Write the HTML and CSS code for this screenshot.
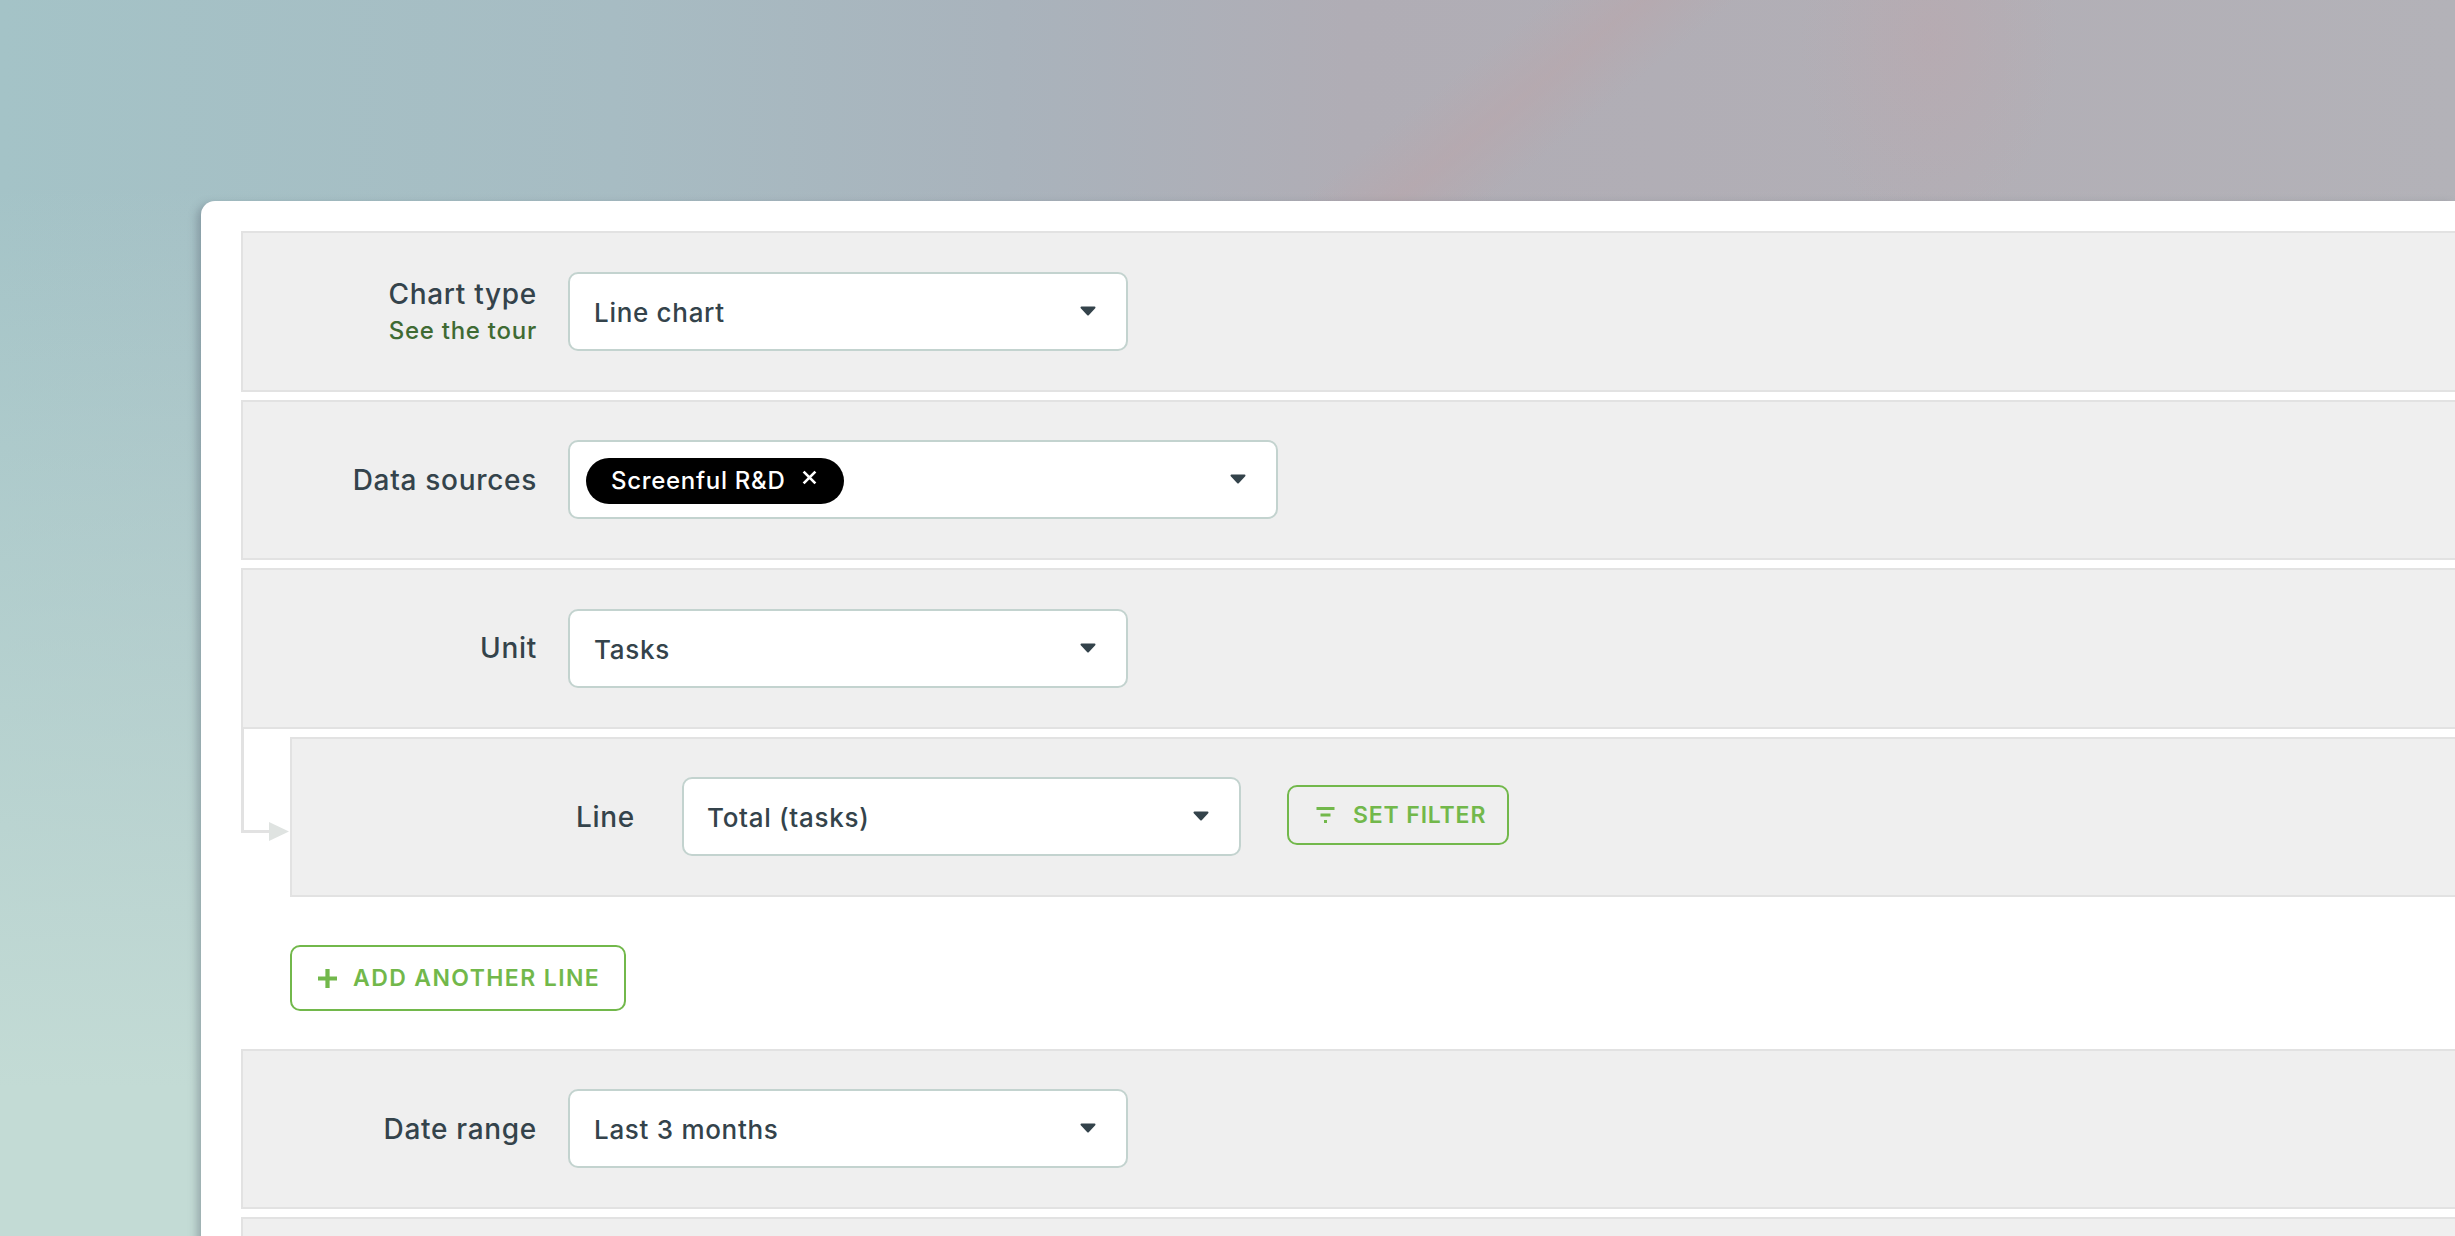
FILE: index.html
```html
<!DOCTYPE html>
<html lang="en">
<head>
<meta charset="utf-8">
<title>Chart settings</title>
<link rel="stylesheet" href="styles.css">
</head>
<body>
<main class="card">
  <section class="row">
    <div class="label-wrap label-wrap-tour">
      <div class="label">Chart type</div>
      <a class="tour">See the tour</a>
    </div>
    <div class="select select-md"><span class="value">Line chart</span><svg class="caret" viewBox="0 0 16 10"><path d="M1.500 1.500H14.500L8 8.500Z"/></svg></div>
  </section>
  <section class="row">
    <div class="label-wrap"><div class="label">Data sources</div></div>
    <div class="select select-lg">
      <span class="chip">Screenful R&amp;D
        <svg class="chip-x" viewBox="0 0 14 14"><path d="M1.500 1.500l11 11M12.500 1.500l-11 11"/></svg>
      </span>
      <svg class="caret" viewBox="0 0 16 10"><path d="M1.500 1.500H14.500L8 8.500Z"/></svg>
    </div>
  </section>
  <div class="unit-group">
    <section class="row">
      <div class="label-wrap"><div class="label">Unit</div></div>
      <div class="select select-md"><span class="value">Tasks</span><svg class="caret" viewBox="0 0 16 10"><path d="M1.500 1.500H14.500L8 8.500Z"/></svg></div>
    </section>
    <svg class="connector" viewBox="0 0 50 110" width="50" height="110">
      <path class="connector-line" d="M1.500 0V104.500H30"/>
      <path class="connector-head" d="M28 95L48 104.500L28 114Z"/>
    </svg>
    <section class="row row-sub">
      <div class="label-wrap label-wrap-sub"><div class="label">Line</div></div>
      <div class="select select-sm"><span class="value">Total (tasks)</span><svg class="caret" viewBox="0 0 16 10"><path d="M1.500 1.500H14.500L8 8.500Z"/></svg></div>
      <button class="btn btn-filter">
        <svg class="filter-icon" viewBox="0 0 18 16"><path d="M0 1.500H18M4 8H14M7.500 14.500H10.500"/></svg>
        SET FILTER
      </button>
    </section>
    <button class="btn btn-add">
      <svg class="plus-icon" viewBox="0 0 18 18"><path d="M9 0V18M0 9H18"/></svg>
      ADD ANOTHER LINE
    </button>
  </div>
  <section class="row row-date">
    <div class="label-wrap"><div class="label">Date range</div></div>
    <div class="select select-md"><span class="value">Last 3 months</span><svg class="caret" viewBox="0 0 16 10"><path d="M1.500 1.500H14.500L8 8.500Z"/></svg></div>
  </section>
  <section class="row"></section>
</main>
</body>
</html>
```
FILE: styles.css
```css
* { box-sizing: border-box; }
html, body { height: 100%; }
body {
  margin: 0;
  overflow: hidden;
  font-family: "Inter", "Liberation Sans", sans-serif;
  color: #34434b;
  background:
    linear-gradient(141deg, rgba(186, 165, 170, 0) 57%, rgba(186, 165, 170, .5) 60.500%, rgba(186, 165, 170, 0) 64%) 0 0 / 100% 210px no-repeat,
    radial-gradient(ellipse 130px 190px at 1930px 40px, rgba(188, 166, 172, .45), rgba(188, 166, 172, 0)),
    linear-gradient(180deg, rgba(195, 220, 213, 0) 15%, #c3dbd5 88%),
    linear-gradient(90deg, #a4c3c7 0%, #a7bcc3 25%, #a9b3bc 41%, #b0adb5 55%, #b2afb6 80%, #b3b2b8 100%);
  padding: 201px 0 0 201px;
}
.card {
  background: #fff;
  border-radius: 14px 0 0 0;
  box-shadow: -4px 3px 8px rgba(80, 90, 105, .38);
  height: 1100px;
  padding: 30px 0 0 40px;
}
.row {
  display: flex;
  align-items: center;
  height: 160.500px;
  margin-bottom: 8px;
  background: #efefef;
  border: solid #e2e2e2;
  border-width: 2px 0 2px 2px;
}
.row-date { height: 159.500px; margin-top: -0.500px; }
.label-wrap {
  width: 294px;
  text-align: right;
  flex: none;
  margin-right: 31px;
}
.label-wrap-tour { padding-top: 1px; }
.label-wrap-sub { width: 343px; margin-right: 47px; }
.label { font-size: 28px; font-weight: 500; line-height: 34px; letter-spacing: .7px; }
.tour { display: block; font-size: 24px; line-height: 30px; font-weight: 500; letter-spacing: .75px; color: #3f6b33; margin-top: 5px; }
.select {
  display: flex;
  align-items: center;
  justify-content: space-between;
  height: 79px;
  padding: 2px 30px 0 24px;
  background: #fff;
  border: 2px solid #c3d3cf;
  border-radius: 10px;
  flex: none;
}
.select-md { width: 560px; }
.select-lg { width: 710px; padding-left: 16px; }
.select-sm { width: 559px; padding-left: 23px; }
.value { font-size: 26px; font-weight: 500; letter-spacing: .7px; }
.caret { width: 16px; height: 10px; margin-top: -3px; fill: #34434b; stroke: #34434b; stroke-width: 2; stroke-linejoin: round; }
.chip {
  display: flex;
  align-items: center;
  height: 46px;
  width: 258px;
  padding: 0 0 0 25px;
  border-radius: 23px;
  background: #000;
  color: #fff;
  font-size: 24px;
  font-weight: 500;
  letter-spacing: .7px;
  white-space: nowrap;
}
.chip-x { width: 15px; height: 15px; margin: -6px 0 0 17px; fill: none; stroke: #fff; stroke-width: 2.500; }
.btn {
  display: flex;
  align-items: center;
  background: transparent;
  border: 2px solid #72b84b;
  border-radius: 10px;
  color: #72b84b;
  font-family: inherit;
  font-size: 23px;
  font-weight: 600;
  white-space: nowrap;
}
.btn-filter { margin: -4px 0 0 46px; width: 222px; height: 60px; padding: 0 0 0 27px; letter-spacing: .85px; }
.filter-icon { width: 19px; height: 16px; margin-right: 18px; fill: none; stroke: #72b84b; stroke-width: 3; }
.unit-group { position: relative; }
.connector { position: absolute; left: 0; top: 159px; overflow: visible; }
.connector-line { fill: none; stroke: #e2e2e2; stroke-width: 3; }
.connector-head { fill: #dfe3e1; }
.row-sub { margin: 8px 0 48px 49px; }
.btn-add { margin: 0 0 38.500px 49px; width: 336px; height: 66px; padding: 0 0 0 26px; background: #fff; letter-spacing: 1.400px; }
.plus-icon { width: 19px; height: 19px; margin-right: 16px; fill: none; stroke: #72b84b; stroke-width: 4; }
```
